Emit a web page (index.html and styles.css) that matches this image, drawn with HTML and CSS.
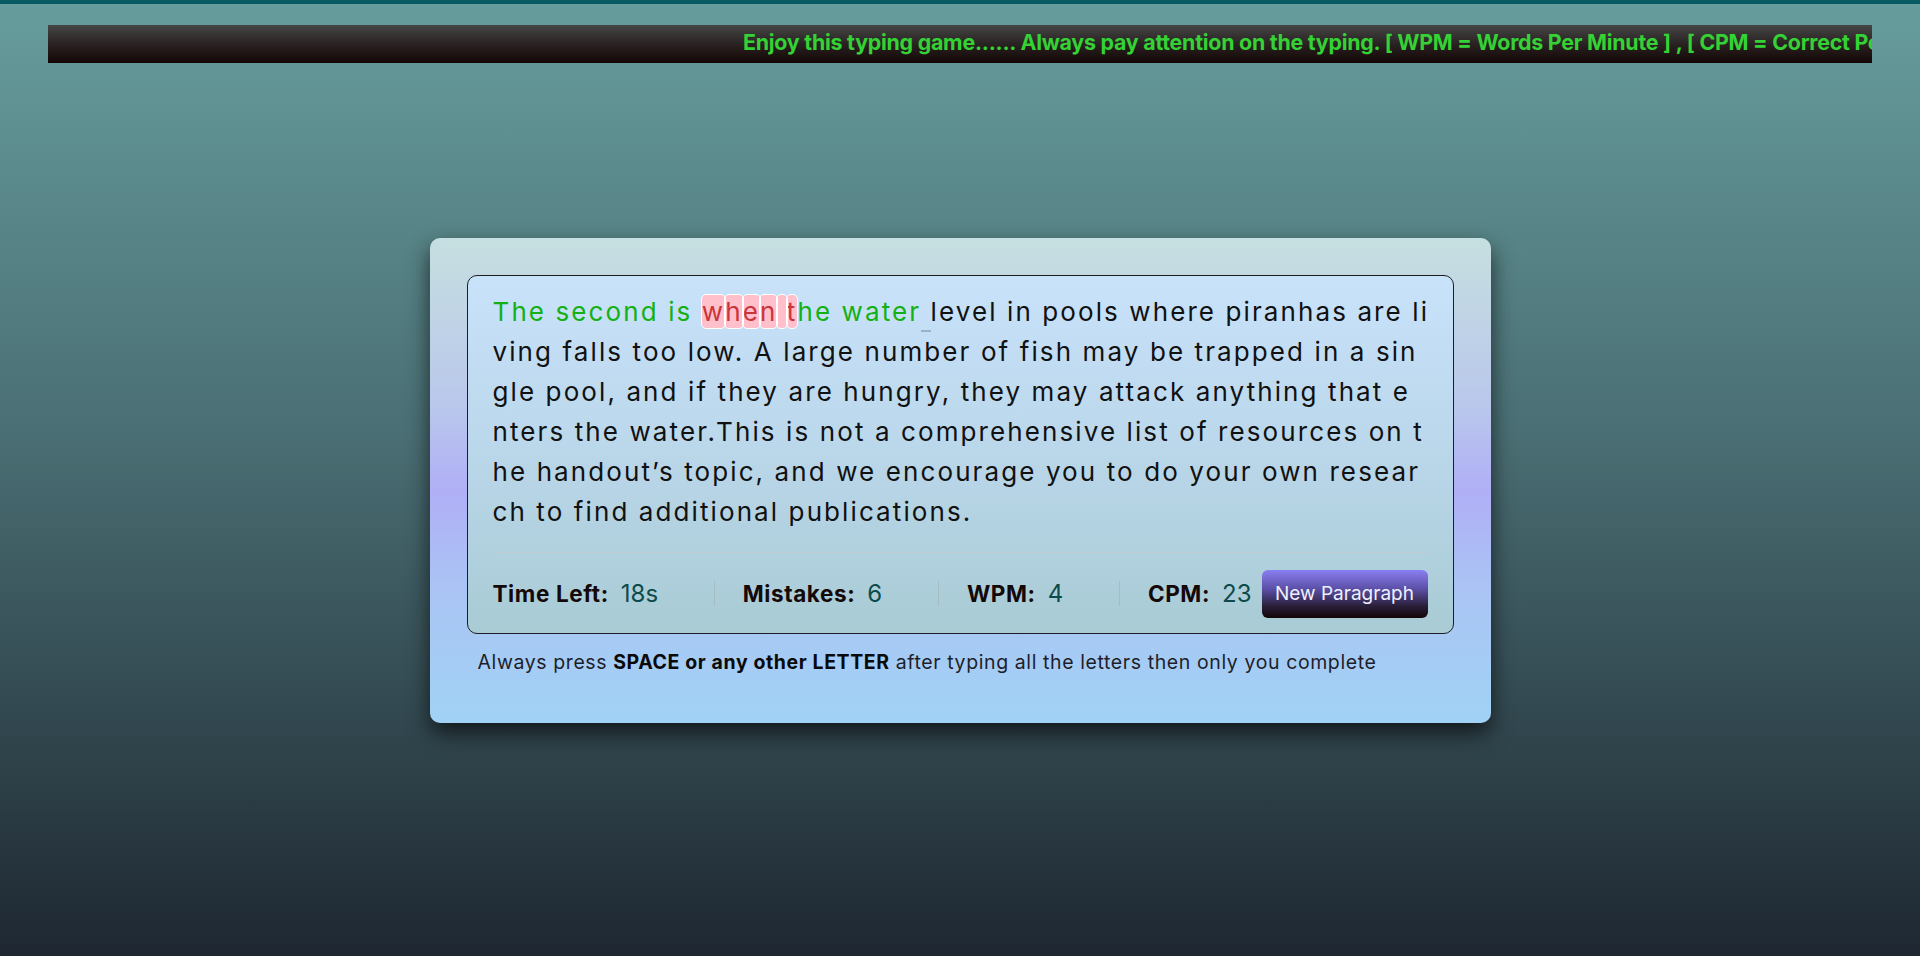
FILE: index.html
```html
<!DOCTYPE html>
<html lang="en">
<head>
<meta charset="utf-8">
<title>Typing Speed Test</title>
<link rel="stylesheet" href="styles.css">
</head>
<body>
<div class="ticker">
  <div class="ticker-text">Enjoy this typing game...... Always pay attention on the typing. [ WPM = Words Per Minute ] , [ CPM = Correct Per Minute ]</div>
</div>
<main class="stage">
  <section class="card">
    <div class="content-box">
      <div class="typing-text">
        <span class="line"><span class="correct">The second is </span><span class="incorrect">w</span><span class="incorrect">h</span><span class="incorrect">e</span><span class="incorrect">n</span><span class="incorrect"> </span><span class="incorrect">t</span><span class="correct">he water</span><span class="active"> </span>level in pools where piranhas are li</span>
        <span class="line">ving falls too low. A large number of fish may be trapped in a sin</span>
        <span class="line">gle pool, and if they are hungry, they may attack anything that e</span>
        <span class="line">nters the water.This is not a comprehensive list of resources on t</span>
        <span class="line">he handout’s topic, and we encourage you to do your own resear</span>
        <span class="line">ch to find additional publications.</span>
      </div>
      <div class="content">
        <ul class="result-details">
          <li class="stat"><span class="label">Time Left:</span><span class="value">18s</span></li>
          <li class="stat"><span class="label">Mistakes:</span><span class="value">6</span></li>
          <li class="stat"><span class="label">WPM:</span><span class="value">4</span></li>
          <li class="stat"><span class="label">CPM:</span><span class="value">23</span></li>
        </ul>
        <button class="btn">New Paragraph</button>
      </div>
    </div>
    <p class="hint">Always press <b>SPACE or any other LETTER</b> after typing all the letters then only you complete</p>
  </section>
</main>
</body>
</html>
```
FILE: styles.css
```css
* { box-sizing: border-box; }
html, body { height: 100%; }
body {
  margin: 0;
  border-top: 4px solid #075c63;
  background: linear-gradient(180deg, #679d9d 0%, #4a6f74 45%, #1e2731 100%);
  font-family: Inter, "Noto Sans", sans-serif;
  color: #111;
  overflow: hidden;
}
.ticker {
  position: fixed;
  top: 25px;
  left: 48px;
  right: 48px;
  height: 38px;
  overflow: hidden;
  background: linear-gradient(180deg, #464646 0%, #2a2222 50%, #140606 100%);
  display: flex;
  align-items: center;
  padding-bottom: 5px;
}
.ticker-text {
  padding-left: 695px;
  white-space: nowrap;
  color: #34d234;
  font-weight: 700;
  font-size: 21.4px;
  letter-spacing: -0.25px;
}
.stage {
  height: 100%;
  display: flex;
  align-items: center;
  justify-content: center;
}
.card {
  width: 1061px;
  padding: 37px 37px 0;
  border-radius: 10px;
  background: linear-gradient(180deg, #c6dfe0 0%, #b9c7ec 35%, #b0aff6 52%, #a9c6f4 75%, #a1d2f5 100%);
  box-shadow: 0 10px 22px rgba(0, 0, 0, 0.65);
}
.content-box {
  border: 1px solid #1d1d24;
  border-radius: 10px;
  padding: 16px 25px 0;
  background: linear-gradient(180deg, #c8e2fa 0%, #bcd8ec 45%, #a8cbd4 100%);
}
.typing-text {
  font-size: 26px;
  line-height: 40px;
  letter-spacing: 2.1px;
  color: #111;
}
.line { display: block; white-space: pre; }
.correct { color: #14b014; }
.incorrect {
  color: #cb3439;
  background: #ffc0cb;
  outline: 1px solid #fff;
  border-radius: 4px;
  padding: 1px 0;
}
.active { position: relative; }
.active::before {
  content: "";
  position: absolute;
  left: 0;
  bottom: -5px;
  width: 10px;
  height: 2px;
  background: #93b6c8;
}
.content {
  margin-top: 20px;
  border-top: 1px solid #c2cbd0;
  padding: 17px 0 15px;
  display: flex;
  align-items: center;
  gap: 10px;
}
.result-details {
  flex: 1;
  margin: 0;
  padding: 0;
  list-style: none;
  display: flex;
  justify-content: space-between;
  align-items: center;
}
.stat {
  display: flex;
  align-items: center;
  height: 25px;
}
.stat + .stat {
  border-left: 1px solid #a9bcc2;
  padding-left: 28px;
}
.label {
  font-weight: 700;
  font-size: 22.5px;
  letter-spacing: 0.6px;
  color: #140808;
}
.value {
  margin-left: 12px;
  font-size: 24px;
  font-weight: 400;
  color: #0d4b4b;
}
.btn {
  width: 166px;
  height: 48px;
  border: none;
  border-radius: 6px;
  background: linear-gradient(180deg, #8b7ef2 0%, #5b4fa6 40%, #2a1f3a 75%, #140707 100%);
  color: #eef0ff;
  font-family: inherit;
  font-size: 19px;
  font-weight: 400;
  cursor: pointer;
}
.hint {
  margin: 15px 0 0;
  padding: 0 0 47px 11px;
  font-size: 19.5px;
  letter-spacing: 0.6px;
  line-height: 27px;
  color: #1e1e2a;
}
.hint b { color: #0a0a0a; font-weight: 700; }
```
